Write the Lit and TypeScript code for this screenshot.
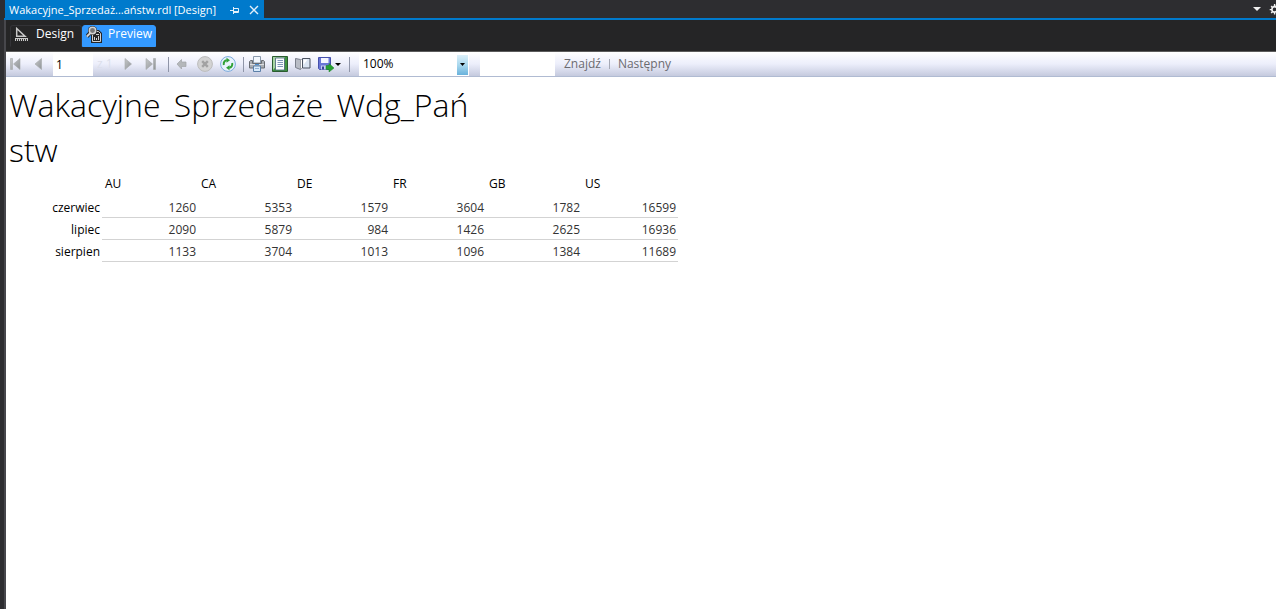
import { LitElement, html, css, svg } from "lit";
import { customElement, state } from "lit/decorators.js";

const countries = ["AU", "CA", "DE", "FR", "GB", "US"];
const sales = [
  { month: "czerwiec", values: [1260, 5353, 1579, 3604, 1782, 16599] },
  { month: "lipiec", values: [2090, 5879, 984, 1426, 2625, 16936] },
  { month: "sierpien", values: [1133, 3704, 1013, 1096, 1384, 11689] },
];

const icon = (body: unknown, width = 16, height = 16) => html`<svg
  width=${width}
  height=${height}
  viewBox="0 0 ${width} ${height}"
  aria-hidden="true"
>
  ${body}
</svg>`;

const grey = svg`<defs><linearGradient id="g" x1="0" y1="0" x2="1" y2="1">
  <stop offset="0" stop-color="#c6c8ca"/><stop offset="1" stop-color="#8f9396"/></linearGradient></defs>`;

const icons = {
  pin: svg`<path d="M0 4.500h3M3.500 1v7M4 2.500h4.500v4H4M4 5.500h4.500" fill="none" stroke="#e3f0fa"/>`,
  close: svg`<path d="M1 1l8 8M9 1l-8 8" fill="none" stroke="#e3f0fa" stroke-width="1.400"/>`,
  gear: svg`<path d="M7 0h2v2l1.600.7L12 1.300 13.700 3l-1.400 1.400.7 1.600h2v2h-2l-.7 1.600 1.400 1.400-1.700 1.700-1.400-1.400L9 13v2H7v-2l-1.600-.7L4 13.700 2.300 12l1.400-1.400L3 9H1V7h2l.7-1.600L2.300 4 4 2.300l1.400 1.400L7 2zM8 5a2.700 2.700 0 1 0 0 5.400A2.700 2.700 0 0 0 8 5z" fill="#f1f1f1" fill-rule="evenodd" transform="scale(.7)"/>`,
  design: svg`<path d="M1.700 1.500v7.700h8.300z" fill="none" stroke="#c8c8c8" stroke-width="1.500"/>
    <path d="M0 11h13v3H0z" fill="#c8c8c8"/><path d="M1.500 12v2M3.500 12v2M5.500 12v2M7.500 12v2M9.500 12v2M11.500 12v2" stroke="#333"/>`,
  preview: svg`<path d="M6 5h6.500l2.500 2.500V16H6z" fill="#252526" stroke="#252526" stroke-width="2"/><path d="M6.500 5.500h6l2 2v8h-8z" fill="#252526" stroke="#d2d2d2"/>
    <path d="M8.500 14v-3M10.500 14v-2M12.500 14v-4" stroke="#d2d2d2"/><path d="M10 8.500h3" stroke="#d2d2d2"/>
    <path d="M4 7l-3 3.500" stroke="#252526" stroke-width="4"/><circle cx="6.500" cy="4.500" r="4.500" fill="#252526"/>
    <circle cx="6.500" cy="4.500" r="3.200" fill="#777" stroke="#d2d2d2" stroke-width="1.500"/><path d="M4.200 7.200L.8 10.500" stroke="#d2d2d2" stroke-width="2"/>`,
  first: svg`${grey}<path d="M3.500 2.500h2v11h-2zM13 2.500v11L6.500 8z" fill="url(#g)" stroke="#a4a7aa" stroke-width=".6"/>`,
  prev: svg`${grey}<path d="M11.500 2.500v11L5 8z" fill="url(#g)" stroke="#a4a7aa" stroke-width=".6"/>`,
  next: svg`${grey}<path d="M5 2.500v11L11.500 8z" fill="url(#g)" stroke="#a4a7aa" stroke-width=".6"/>`,
  last: svg`${grey}<path d="M3 2.500v11L9.500 8zM10.500 2.500h2v11h-2z" fill="url(#g)" stroke="#a4a7aa" stroke-width=".6"/>`,
  back: svg`<path d="M3 8l4.500-4.500V6H12v4.500H7.500V13z" fill="#b4b7ba" stroke="#a2a5a8" stroke-width=".7"/>`,
  stop: svg`<circle cx="8" cy="8" r="7.400" fill="#d3d3d3" stroke="#bcbcbc"/><path d="M5.200 5.200l5.600 5.600M10.800 5.200l-5.600 5.600" stroke="#a2a2a2" stroke-width="2.400"/>`,
  refresh: svg`<circle cx="8" cy="8" r="7.400" fill="#e8f3fd" stroke="#7aa9dc"/>
    <path d="M3.800 9C3.300 6 4.800 4.500 6.800 4.300" fill="none" stroke="#2fa136" stroke-width="2"/><path d="M6.500 1.800v5L10 4.300z" fill="#2fa136"/>
    <path d="M12.200 7c.5 3-1 4.500-3 4.700" fill="none" stroke="#2fa136" stroke-width="2"/><path d="M9.500 14.200v-5L6 11.700z" fill="#2fa136"/>`,
  print: svg`<path d="M4.500.5h7V7h-7z" fill="#f2f7fd" stroke="#8b9aac"/><path d="M.5 5.500l1-1h2v3h9v-3h2l1 1V12H.5z" fill="#aaaeb4" stroke="#686c72"/>
    <path d="M1 8.500h14" stroke="#dcdee2"/><path d="M4.500 10h7v5.500h-7z" fill="#d8eafa" stroke="#5c80a8"/><path d="M6 8.500h4" stroke="#4c8fd0"/><path d="M6 12.500h4" stroke="#8fb0d4"/>`,
  layout: svg`<path d="M.5.5h15v15H.5z" fill="#3f9440" stroke="#2b5c30"/><path d="M1 1h12L1 14z" fill="#a8d5a4"/>
    <path d="M3.500 2h9v12h-9z" fill="#fbfdff" stroke="#47607a" stroke-width=".8"/><path d="M5.500 4.500H11M5.500 6.500H11M5.500 8.500H11M5.500 10.500H11" stroke="#7f97b8"/>`,
  setup: svg`<path d="M.5 2.500l5 1v10l-5-2z" fill="#b9bdc6" stroke="#7b808c"/><path d="M5.500 13.500l2-2v-8h-2z" fill="#fff" stroke="#8b8f98" stroke-width=".7"/>
    <path d="M7.500 2.500h7.500v9.500H7.500z" fill="#dbe5f2" stroke="#4b5360"/><path d="M8.500 3.500h4L8.500 9z" fill="#fff"/>`,
  save: svg`<path d="M.5 1.500h12v12h-11l-1-1z" fill="#6a76d6" stroke="#4550ac"/><path d="M3 2h7.500v5H3z" fill="#f3f5ff"/><path d="M3 9.500h6v4H3z" fill="#c6ccf0"/><path d="M4 10.500h2v3H4z" fill="#39429a"/>
    <path d="M8 9.500h3V7.500l5 4.500-5 4v-2.500H8z" fill="#27a032" stroke="#198024" stroke-width=".5"/><path d="M17 7h6l-3 3z" fill="#000"/>`,
};

@customElement("app-root")
export class AppRoot extends LitElement {
  static styles = css`
    :host {
      display: flex;
      flex-direction: column;
      min-height: 100vh;
      box-sizing: border-box;
      border-left: 4px solid #2d2d30;
      background: #fff;
      font: 12px/16px "Open Sans", "Noto Sans", sans-serif;
      color: #000;
    }
    * { box-sizing: border-box; }
    svg { display: block; flex: none; }
    button, input, select {
      font: inherit;
      color: inherit;
      border: 0;
      border-radius: 0;
      margin: 0;
      padding: 0;
      background: none;
    }
    .strip {
      display: flex;
      align-items: center;
      height: 20px;
      padding-left: 1px;
      background: #2d2d30;
      border-bottom: 2px solid #007acc;
    }
    .file {
      display: flex;
      align-items: center;
      gap: 10px;
      height: 20px;
      margin-bottom: -2px;
      padding: 0 5px 0 4px;
      background: #007acc;
      color: #fff;
      white-space: nowrap;
    }
    .name { font-size: 11px; margin-right: 4px; }
    .tools { display: flex; align-items: center; gap: 8px; margin-left: auto; overflow: hidden; }
    .gear { width: 7px; overflow: hidden; }
    .pane {
      flex: 1;
      display: flex;
      flex-direction: column;
      border-left: 2px solid #47474c;
    }
    .views {
      display: flex;
      align-items: flex-end;
      height: 32px;
      padding: 0 0 4px 4px;
      background: #252526;
      border-bottom: 1px solid #5c5c5c;
    }
    .view {
      display: flex;
      align-items: center;
      gap: 8px;
      height: 22px;
      padding: 0 7px 4px 4px;
      border: 1px solid #333337;
      border-bottom-color: #252526;
      border-radius: 3px 3px 0 0;
      color: #fff;
    }
    .view.on {
      gap: 6px;
      padding: 0 3px 4px 3px;
      background: #3399ff;
      border-color: #3399ff;
    }
    .bar {
      display: flex;
      height: 25px;
      padding-left: 1px;
      background: linear-gradient(#fff, #eceefb 50%, #c5cade);
      border-bottom: 1px solid #b0bbd2;
    }
    .group { display: flex; align-items: center; gap: 7px; }
    .group + .group { margin-left: 7px; padding-left: 6px; background: linear-gradient(#8f95a8, #8f95a8) left / 1px 15px no-repeat; }
    .nav { margin-right: 2px; }
    .group.search { padding-left: 10px; gap: 0; }
    .pages { display: flex; align-items: center; gap: 4px; }
    .page { width: 40px; height: 24px; padding: 0 3px; background: #fff; }
    .total { width: 16px; color: #dcdfeb; white-space: nowrap; }
    .zoom { display: grid; width: 110px; height: 24px; margin-right: 11px; align-items: center; }
    .zoom > * { grid-area: 1 / 1; }
    .select {
      appearance: none;
      width: 110px;
      height: 24px;
      padding: 0 16px 0 4px;
      background: linear-gradient(#dcf0fa, #a9d8ee 50%, #68b2dc) right 1px top 3px / 11px 20px no-repeat #fff;
    }
    .arrow { justify-self: end; margin-right: 4px; pointer-events: none; }
    .find { width: 75px; height: 24px; padding: 0 3px; background: #fff; margin-right: 9px; }
    .link { color: #6b6b70; text-decoration: none; }
    .link + .link { margin-left: 8px; padding-left: 9px; background: linear-gradient(#a5a8b5, #a5a8b5) left / 1px 10px no-repeat; }
    .report { flex: 1; padding: 5px 3px; }
    .title {
      margin: 0;
      font-size: 32px;
      line-height: 45px;
      font-weight: 300;
    }
    .grid { border-collapse: separate; border-spacing: 0; table-layout: fixed; width: 670px; margin-left: -1px; }
    .grid th, .grid td { height: 22px; padding: 2px 2px 0 3px; line-height: 16px; }
    .grid th { font-weight: 400; text-align: left; }
    .grid thead th, .grid .corner { height: 24px; padding-top: 0; border: 0; }
    .grid .corner { width: 94px; }
    .grid tbody th { text-align: right; }
    .grid td { text-align: right; color: #333; border-bottom: 1px solid #d3d3d3; }
  `;

  @state() private view = "Preview";

  private tab(name: string, glyph: unknown) {
    return html`<button
      class="view ${this.view === name ? "on" : ""}"
      aria-pressed=${this.view === name}
      @click=${() => (this.view = name)}
    >${glyph}${name}</button>`;
  }

  private tool(name: string, body: unknown, width = 16) {
    return html`<button aria-label=${name}>${icon(body, width)}</button>`;
  }

  render() {
    return html`
      <header class="strip">
        <div class="file">
          <span class="name">Wakacyjne_Sprzedaż...aństw.rdl [Design]</span>
          <button aria-label="Pin">${icon(icons.pin, 9, 9)}</button>
          <button aria-label="Close">${icon(icons.close, 10, 10)}</button>
        </div>
        <div class="tools">
          <button aria-label="Files">${icon(svg`<path d="M0 2h8L4 6z" fill="#f1f1f1"/>`, 8, 8)}</button>
          <button class="gear" aria-label="Options">${icon(icons.gear, 11, 11)}</button>
        </div>
      </header>
      <main class="pane">
        <nav class="views">
          ${this.tab("Design", icon(icons.design, 13, 14))}
          ${this.tab("Preview", icon(icons.preview, 16, 17))}
        </nav>
        <div class="bar">
          <div class="group nav">
            ${this.tool("First", icons.first)}${this.tool("Previous", icons.prev)}
            <div class="pages">
              <input class="page" aria-label="Page" .value=${"1"} />
              <span class="total">z 1</span>
            </div>
            ${this.tool("Next", icons.next)}${this.tool("Last", icons.last)}
          </div>
          <div class="group">
            ${this.tool("Back", icons.back)}${this.tool("Stop", icons.stop)}${this.tool("Refresh", icons.refresh)}
          </div>
          <div class="group">
            ${this.tool("Print", icons.print)}${this.tool("Print layout", icons.layout)}
            ${this.tool("Page setup", icons.setup)}${this.tool("Export", icons.save, 24)}
          </div>
          <div class="group search">
            <div class="zoom">
              <select class="select" aria-label="Zoom"><option>100%</option></select>
              <svg class="arrow" width="5" height="3" viewBox="0 0 5 3" aria-hidden="true"><path d="M0 0h5L2.500 3z" /></svg>
            </div>
            <input class="find" aria-label="Text" />
            <a class="link" href="#find">Znajdź</a>
            <a class="link" href="#next">Następny</a>
          </div>
        </div>
        <section class="report">
          <h1 class="title">Wakacyjne_Sprzedaże_Wdg_Pań<br />stw</h1>
          <table class="grid">
            <thead>
              <tr><td class="corner"></td>${countries.map((c) => html`<th scope="col">${c}</th>`)}</tr>
            </thead>
            <tbody>
              ${sales.map((row) => html`<tr>
                <th scope="row">${row.month}</th>
                ${row.values.map((v) => html`<td>${v}</td>`)}
              </tr>`)}
            </tbody>
          </table>
        </section>
      </main>
    `;
  }
}
